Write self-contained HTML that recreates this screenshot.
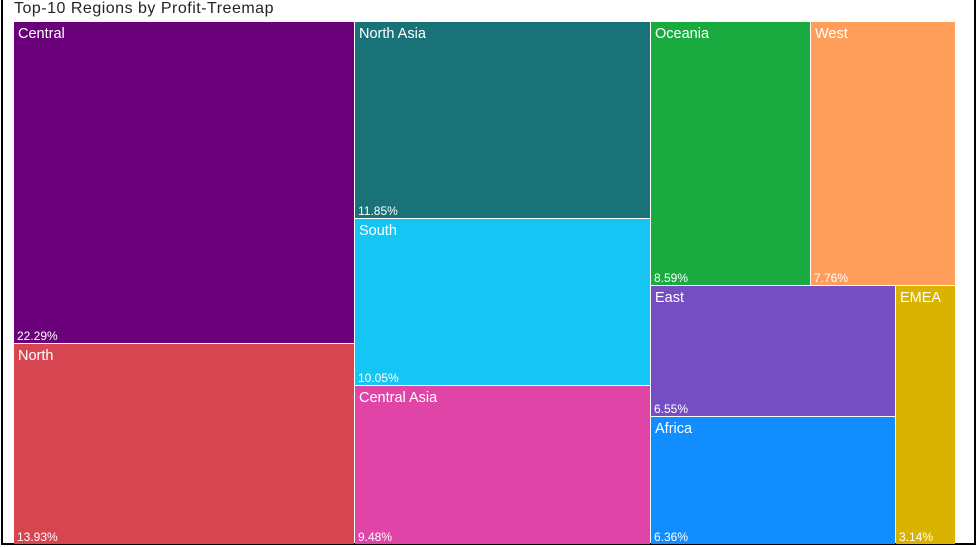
<!DOCTYPE html><html><head><style>
body{margin:0;width:979px;height:547px;background:#fff;position:relative;overflow:hidden;font-family:"Liberation Sans",sans-serif}
.frame{position:absolute;left:1px;top:-2px;width:975px;height:547px;border:2px solid #000;box-sizing:border-box}
.t{position:absolute;left:14px;top:0px;font-size:16px;color:#252423;letter-spacing:0.5px}
.b{position:absolute;color:#fff;box-sizing:border-box}
.b .n{position:absolute;left:4px;top:4px;font-size:14.5px}
.b .p{position:absolute;left:3px;bottom:0px;font-size:12px}
</style></head><body>
<div class="frame"></div>
<div class="t">Top-10 Regions by Profit-Treemap</div>
<div class="b" style="left:14px;top:22px;width:340px;height:321px;background:#6b007b"><span class="n">Central</span><span class="p">22.29%</span></div>
<div class="b" style="left:14px;top:344px;width:340px;height:200px;background:#d64550"><span class="n">North</span><span class="p">13.93%</span></div>
<div class="b" style="left:355px;top:22px;width:295px;height:196px;background:#197278"><span class="n">North Asia</span><span class="p">11.85%</span></div>
<div class="b" style="left:355px;top:219px;width:295px;height:166px;background:#15c6f4"><span class="n">South</span><span class="p">10.05%</span></div>
<div class="b" style="left:355px;top:386px;width:295px;height:158px;background:#e044a7"><span class="n">Central Asia</span><span class="p">9.48%</span></div>
<div class="b" style="left:651px;top:22px;width:159px;height:263px;background:#1aab40"><span class="n">Oceania</span><span class="p">8.59%</span></div>
<div class="b" style="left:811px;top:22px;width:144px;height:263px;background:#fe9e5a"><span class="n">West</span><span class="p">7.76%</span></div>
<div class="b" style="left:651px;top:286px;width:244px;height:130px;background:#744ec2"><span class="n">East</span><span class="p">6.55%</span></div>
<div class="b" style="left:651px;top:417px;width:244px;height:127px;background:#118dff"><span class="n">Africa</span><span class="p">6.36%</span></div>
<div class="b" style="left:896px;top:286px;width:59px;height:258px;background:#d9b300"><span class="n">EMEA</span><span class="p">3.14%</span></div>
</body></html>
